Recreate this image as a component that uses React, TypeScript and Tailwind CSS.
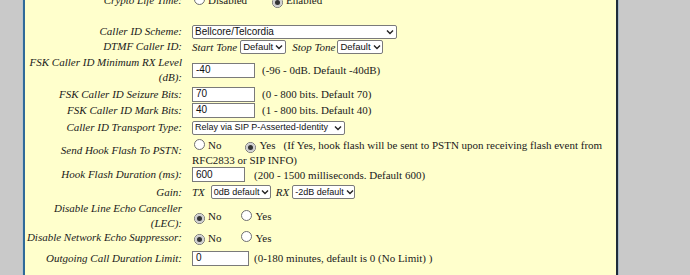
import type { ReactNode } from "react";

const serif = { fontFamily: '"Liberation Serif", "Times New Roman", serif' };
const sans = { fontFamily: '"Liberation Sans", Arial, sans-serif' };

function Radio({ checked }: { checked?: boolean }) {
  return (
    <span className="inline-grid h-[11px] w-[11px] shrink-0 place-items-center rounded-full border border-[#6f6f6f] bg-white">
      {checked && <span className="grid h-[9px] w-[9px] place-items-center rounded-full bg-[#cfcfcf]"><span className="h-[5px] w-[5px] rounded-full bg-[#333]" /></span>}
    </span>
  );
}

function Opt({ label, checked, gap }: { label: string; checked?: boolean; gap: string }) {
  return (
    <span className={`flex items-center ${gap}`}>
      <span className="ml-[2px] mt-[1px]"><Radio checked={checked} /></span>
      <span className="ml-[3px]">{label}</span>
    </span>
  );
}

function Select({ value, w, size = "text-[10px]" }: { value: string; w: string; size?: string }) {
  return (
    <span style={sans} className={`flex h-[14px] ${w} ${size} shrink-0 items-center justify-between whitespace-nowrap rounded-[2px] border border-[#7a7a7a] bg-white pl-[2px] pr-[2px] leading-none text-[#111]`}>
      <span>{value}</span>
      <svg width="8" height="6" viewBox="0 0 8 6" className="ml-[2px] shrink-0">
        <path d="M1 1.5 L4 4.5 L7 1.5" fill="none" stroke="#222" strokeWidth="1.4" />
      </svg>
    </span>
  );
}

function Input({ value, w }: { value: string; w: string }) {
  return (
    <span style={sans} className={`flex h-[15px] ${w} items-center border border-[#7a7a7a] bg-white pl-[3px] text-[10px] leading-none text-[#111]`}>
      {value}
    </span>
  );
}

function Row({ label, h, children }: { label: ReactNode; h: string; children?: ReactNode }) {
  return (
    <div className={`flex ${h} items-center`}>
      <div className="w-[158px] shrink-0 pr-[1px] text-right italic leading-[15px]">{label}</div>
      <div className="flex items-center pl-[9px] leading-[14px]">{children}</div>
    </div>
  );
}

export default function App() {
  return (
    <div style={serif} className="flex h-[275px] w-[690px] overflow-hidden bg-[#c9c9c9] text-[11px] text-[#1a1a1a]">
      <div className="w-[22px] shrink-0" />
      <div className="w-[1px] shrink-0 bg-[#b9c4cf]" />
      <div className="w-[2px] shrink-0 bg-[#2f6a99]" />
      <div className="w-[591px] shrink-0 bg-[#ffffcc]">
        <div className="-mt-[8px] flex flex-col">
          <Row label="Crypto Life Time:" h="h-[16px]">
            <Opt label="Disabled" gap="" />
            <Opt label="Enabled" checked gap="ml-[23px]" />
          </Row>
          <div className="h-[16px]" />
          <Row label="Caller ID Scheme:" h="h-[15px]">
            <Select value="Bellcore/Telcordia" w="w-[205px]" />
          </Row>
          <Row label="DTMF Caller ID:" h="h-[15px]">
            <span className="mr-[3px] italic">Start Tone</span>
            <Select value="Default" w="w-[46px]" size="text-[9.5px]" />
            <span className="ml-[6px] mr-[2px] italic">Stop Tone</span>
            <Select value="Default" w="w-[46px]" size="text-[9.5px]" />
          </Row>
          <Row label={<>FSK Caller ID Minimum RX Level<br />(dB):</>} h="h-[32px]">
            <Input value="-40" w="w-[63px]" />
            <span className="ml-[7px]">(-96 - 0dB. Default -40dB)</span>
          </Row>
          <Row label="FSK Caller ID Seizure Bits:" h="h-[16px]">
            <Input value="70" w="w-[63px]" />
            <span className="ml-[7px]">(0 - 800 bits. Default 70)</span>
          </Row>
          <Row label="FSK Caller ID Mark Bits:" h="h-[16px]">
            <Input value="40" w="w-[63px]" />
            <span className="ml-[7px]">(1 - 800 bits. Default 40)</span>
          </Row>
          <Row label="Caller ID Transport Type:" h="h-[19px]">
            <Select value="Relay via SIP P-Asserted-Identity" w="w-[153px]" size="text-[9px]" />
          </Row>
          <div className="flex h-[30px] items-center">
            <div className="w-[158px] shrink-0 pb-[4px] pr-[1px] text-right italic leading-[15px]">Send Hook Flash To PSTN:</div>
            <div className="flex flex-col pl-[9px] leading-[14px]">
              <div className="flex items-center">
                <Opt label="No" gap="" />
                <Opt label="Yes" checked gap="ml-[22px]" />
                <span className="ml-[8px]">(If Yes, hook flash will be sent to PSTN upon receiving flash event from</span>
              </div>
              <div>RFC2833 or SIP INFO)</div>
            </div>
          </div>
          <Row label="Hook Flash Duration (ms):" h="h-[15px]">
            <Input value="600" w="w-[53px]" />
            <span className="ml-[9px]">(200 - 1500 milliseconds. Default 600)</span>
          </Row>
          <Row label="Gain:" h="h-[20px]">
            <span className="mr-[6px] italic">TX</span>
            <Select value="0dB default" w="w-[60px]" size="text-[9px]" />
            <span className="ml-[5px] mr-[3px] italic">RX</span>
            <Select value="-2dB default" w="w-[63px]" size="text-[9px]" />
          </Row>
          <Row label={<>Disable Line Echo Canceller<br />(LEC):</>} h="h-[28px]">
            <Opt label="No" checked gap="" />
            <Opt label="Yes" gap="ml-[18px]" />
          </Row>
          <Row label="Disable Network Echo Suppressor:" h="h-[15px]">
            <Opt label="No" checked gap="" />
            <Opt label="Yes" gap="ml-[18px]" />
          </Row>
          <Row label="Outgoing Call Duration Limit:" h="h-[26px]">
            <Input value="0" w="w-[57px]" />
            <span className="ml-[5px]">(0-180 minutes, default is 0 (No Limit) )</span>
          </Row>
        </div>
      </div>
      <div className="w-[2px] shrink-0 bg-[#1d2b3a]" />
      <div className="w-[1px] shrink-0 bg-[#a5b7c8]" />
    </div>
  );
}
